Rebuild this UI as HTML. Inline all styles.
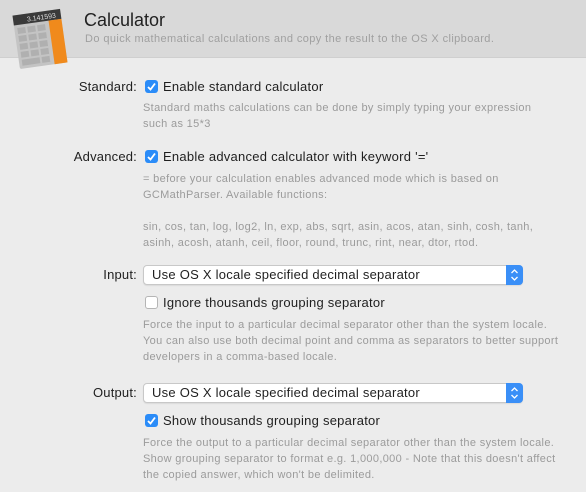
<!DOCTYPE html><html><head><style>
body{margin:0;width:586px;height:492px;background:#ececec;font-family:"Liberation Sans",sans-serif;position:relative;overflow:hidden;color:#1f1f1f}
.hdr{position:absolute;left:0;top:0;width:586px;height:57px;background:#d9d9d9;border-bottom:1px solid #cfcfcf}
.a{position:absolute;white-space:nowrap}
.lbl{position:absolute;right:449px;font-size:13px;letter-spacing:0.2px}
.t{font-size:13px;letter-spacing:0.25px}
.d{position:absolute;left:143px;font-size:11px;color:#9b9b9b;line-height:16px;letter-spacing:0.34px;white-space:nowrap}
.cb{position:absolute;left:145px;width:13px;height:13px;border-radius:3px;background:#2b8cf8;box-sizing:border-box}
.cb svg{position:absolute;left:1px;top:1px}
.cb.off{background:#fff;border:1px solid #b5b5b5}
.pop{position:absolute;left:143px;width:380px;height:20px;background:#fff;border:1px solid #c8c8c8;border-radius:4px;box-sizing:border-box;font-size:13px;line-height:18px;padding-left:8px;box-shadow:0 1px 1px rgba(0,0,0,.08);letter-spacing:0.25px}
.pop .ar{position:absolute;right:-1px;top:-1px;width:17px;height:20px;background:#3a8ff7;border-radius:0 4px 4px 0}
</style></head><body>
<div class="hdr"></div>
<svg class="a" style="left:12px;top:8px" width="56" height="62" viewBox="0 0 56 62">
<g transform="rotate(-8 28 31)">
<rect x="4" y="4" width="48" height="54" rx="2" fill="#c4c4c4"/>
<rect x="4" y="4" width="48" height="10" fill="#3a3a3a"/>
<text x="47" y="12" font-size="7" fill="#ddd" text-anchor="end" font-family="Liberation Sans">3.141593</text>
<rect x="39" y="14" width="13" height="44" fill="#f08a1c"/>
<g fill="#b0b0b0">
<rect x="7" y="17" width="8" height="6"/><rect x="17" y="17" width="8" height="6"/><rect x="27" y="17" width="8" height="6"/>
<rect x="7" y="25" width="8" height="6"/><rect x="17" y="25" width="8" height="6"/><rect x="27" y="25" width="8" height="6"/>
<rect x="7" y="33" width="8" height="6"/><rect x="17" y="33" width="8" height="6"/><rect x="27" y="33" width="8" height="6"/>
<rect x="7" y="41" width="8" height="6"/><rect x="17" y="41" width="8" height="6"/><rect x="27" y="41" width="8" height="6"/>
<rect x="7" y="49" width="18" height="6"/><rect x="27" y="49" width="8" height="6"/></g>
</g></svg>
<div class="a" style="left:84px;top:10px;font-size:18px;color:#222">Calculator</div>
<div class="a" style="left:85px;top:33px;font-size:11px;color:#a0a0a0;letter-spacing:0.4px">Do quick mathematical calculations and copy the result to the OS X clipboard.</div>

<div class="lbl" style="top:79px">Standard:</div>
<div class="cb" style="top:80px"><svg width="11" height="11"><path d="M2 6l2.5 2.5L9 2.5" stroke="#fff" stroke-width="1.8" fill="none"/></svg></div>
<div class="a t" style="left:163px;top:79px">Enable standard calculator</div>
<div class="d" style="top:100px">Standard maths calculations can be done by simply typing your expression<br>such as 15*3</div>

<div class="lbl" style="top:149px">Advanced:</div>
<div class="cb" style="top:150px"><svg width="11" height="11"><path d="M2 6l2.5 2.5L9 2.5" stroke="#fff" stroke-width="1.8" fill="none"/></svg></div>
<div class="a t" style="left:163px;top:149px">Enable advanced calculator with keyword '='</div>
<div class="d" style="top:171px">= before your calculation enables advanced mode which is based on<br>GCMathParser. Available functions:<br><br>sin, cos, tan, log, log2, ln, exp, abs, sqrt, asin, acos, atan, sinh, cosh, tanh,<br>asinh, acosh, atanh, ceil, floor, round, trunc, rint, near, dtor, rtod.</div>

<div class="lbl" style="top:267px">Input:</div>
<div class="pop" style="top:265px">Use OS X locale specified decimal separator<div class="ar"><svg width="17" height="20"><path d="M5.5 8l3-3 3 3M5.5 12l3 3 3-3" stroke="#fff" stroke-width="1.3" fill="none"/></svg></div></div>
<div class="cb off" style="top:296px"></div>
<div class="a t" style="left:163px;top:295px">Ignore thousands grouping separator</div>
<div class="d" style="top:317px">Force the input to a particular decimal separator other than the system locale.<br>You can also use both decimal point and comma as separators to better support<br>developers in a comma-based locale.</div>

<div class="lbl" style="top:385px">Output:</div>
<div class="pop" style="top:383px">Use OS X locale specified decimal separator<div class="ar"><svg width="17" height="20"><path d="M5.5 8l3-3 3 3M5.5 12l3 3 3-3" stroke="#fff" stroke-width="1.3" fill="none"/></svg></div></div>
<div class="cb" style="top:414px"><svg width="11" height="11"><path d="M2 6l2.5 2.5L9 2.5" stroke="#fff" stroke-width="1.8" fill="none"/></svg></div>
<div class="a t" style="left:163px;top:413px">Show thousands grouping separator</div>
<div class="d" style="top:435px">Force the output to a particular decimal separator other than the system locale.<br>Show grouping separator to format e.g. 1,000,000 - Note that this doesn't affect<br>the copied answer, which won't be delimited.</div>
</body></html>
